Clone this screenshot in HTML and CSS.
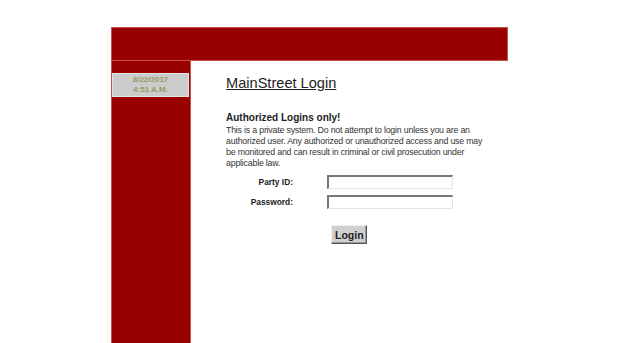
FILE: index.html
```html
<!DOCTYPE html>
<html>
<head lang="en">
    <meta charset="UTF-8">
    <title>MainStreet Login</title>
    <link rel="stylesheet" href="styles.css">
</head>
<body>
<div id="page">
    <div id="top"></div>
    <div id="body">
        <div id="side">
            <div class="clock">8/22/2017<br/>4:51 A.M.</div>
        </div>
        <div id="main">
            <h1><a href="javascript:;">MainStreet Login</a></h1>
            <h2>Authorized Logins only!</h2>
            <p class="notice">This is a private system. Do not attempt to login unless you are an<br/>
                authorized user. Any authorized or unauthorized access and use may<br/>
                be monitored and can result in criminal or civil prosecution under<br/>
                applicable law.</p>
            <form class="login">
                <div class="row">
                    <label>Party ID:</label>
                    <input type="text"/>
                </div>
                <div class="row">
                    <label>Password:</label>
                    <input type="password"/>
                </div>
                <div class="row">
                    <span class="spacer"></span>
                    <button type="button">Login</button>
                </div>
            </form>
        </div>
    </div>
</div>
</body>
</html>
```

FILE: styles.css
```css
*{
    margin: 0;
    padding: 0;
}
body{
    font-family: "Liberation Sans", Arial, sans-serif;
    background: #fff;
    color: #222;
    padding-top: 27px;
}
#page{
    width: 397px;
    margin-left: 111px;
}
#top{
    height: 34px;
    background-color: #990000;
    box-shadow: inset 0 0 0 1px #c65050;
}
#body{
    display: flex;
    min-height: 282px;
}
#side{
    width: 80px;
    background-color: #990000;
    box-shadow: inset 1px 0 0 #c65050, inset -1px 0 0 #c65050;
    padding: 12px 2px 0 1px;
    box-sizing: border-box;
}
.clock{
    background-color: #cccccc;
    border: 1px solid #e2e2e2;
    height: 21px;
    color: #999966;
    font-size: 8px;
    font-weight: bold;
    text-align: center;
    line-height: 10px;
    padding-top: 1px;
}
#main{
    flex: 1;
    padding: 14px 0 0 35px;
}
h1{
    font-size: 14.6px;
    font-weight: normal;
    line-height: 17px;
}
h1 a{
    color: #222;
}
h2{
    font-size: 10px;
    font-weight: bold;
    margin-top: 20px;
    line-height: 12px;
}
.notice{
    font-size: 8.8px;
    letter-spacing: -0.2px;
    line-height: 11px;
    color: #333;
    white-space: nowrap;
    margin-top: 1px;
}
.login{
    margin-top: 6px;
}
.row{
    display: flex;
    align-items: center;
    gap: 34px;
    margin-bottom: 6px;
}
.row label,.spacer{
    width: 67px;
    text-align: right;
    font-size: 8.4px;
    font-weight: bold;
}
.row input{
    width: 126px;
    height: 14px;
    box-sizing: border-box;
    border: 1px solid #e4e4e4;
    border-top: 2px solid #777;
    border-left: 2px solid #777;
    font-size: 9px;
}
.row button{
    margin-top: 10px;
    margin-left: 4px;
    font-family: "Liberation Sans", Arial, sans-serif;
    font-size: 10.5px;
    font-weight: bold;
    color: #222;
    background: #d0d0d0;
    border: 1px solid #f0f0f0;
    border-right-color: #555;
    border-bottom-color: #555;
    box-shadow: inset -1px -1px 0 #999;
    padding: 0 3px;
    width: 36px;
    height: 19px;
}
```
